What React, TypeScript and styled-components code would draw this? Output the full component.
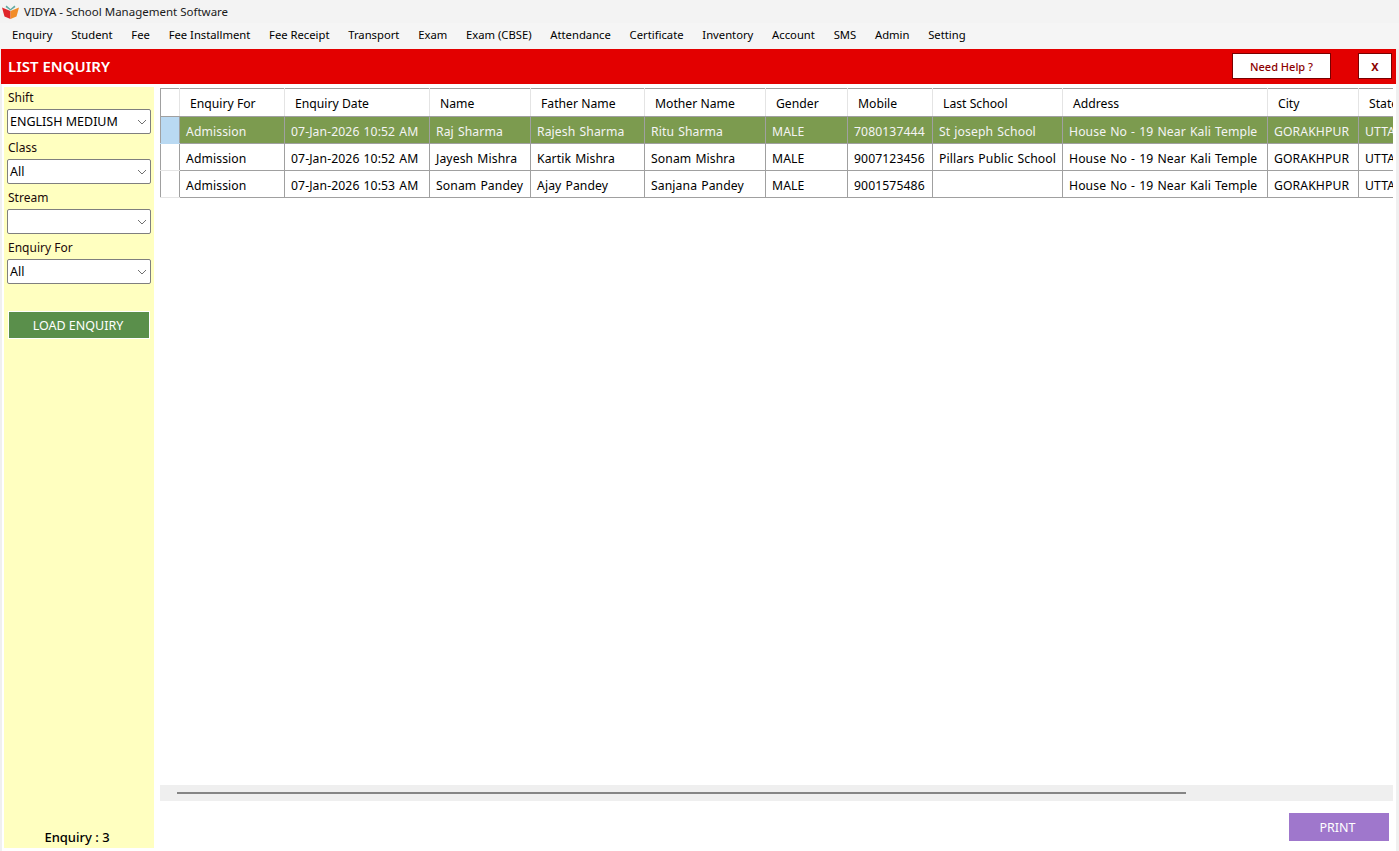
import styled, { createGlobalStyle } from "styled-components";

const GlobalStyle = createGlobalStyle`
  html, body {
    margin: 0;
    padding: 0;
    height: 100%;
    overflow: hidden;
    background: #f0f0f0;
    font-family: "Noto Sans", "Open Sans", sans-serif;
    font-size: 12px;
    color: #000000;
  }
`;

const Page = styled.div`
  width: 1399px;
  height: 851px;
  display: flex;
  flex-direction: column;
  background: #f0f0f0;
`;

const TitleBar = styled.div`
  height: 23px;
  display: flex;
  align-items: center;
  gap: 5px;
  padding-left: 2px;
  background: #f3f3f3;
  font-size: 11.5px;
  color: #1a1a1a;
`;

const MenuBar = styled.nav`
  height: 26px;
  padding: 0 0 3px 12px;
  box-sizing: border-box;
  display: flex;
  align-items: center;
  background: #f5f5f5;
`;

const MenuItem = styled.span`
  margin-right: 18.75px;
  font-size: 11.25px;
  white-space: nowrap;
`;

const Header = styled.header`
  height: 35px;
  margin: 0 3px 0 1px;
  padding: 0 4px 1px 7px;
  box-sizing: border-box;
  display: flex;
  align-items: center;
  background: #e30000;
`;

const Heading = styled.h1`
  flex: 1;
  margin: 0;
  font-size: 15px;
  font-weight: 600;
  color: #ffffff;
`;

const HeaderButton = styled.button<{ $wide?: boolean; $bold?: boolean }>`
  width: ${(p) => (p.$wide ? "99px" : "34px")};
  height: 26px;
  margin-left: ${(p) => (p.$wide ? "0" : "27px")};
  padding: 0;
  border: 1px solid #7a0000;
  background: #ffffff;
  color: #8c0000;
  font-family: inherit;
  font-size: 11px;
  font-weight: ${(p) => (p.$bold ? 700 : 500)};
`;

const Body = styled.div`
  flex: 1;
  min-height: 0;
  display: flex;
  margin: 0 3px 0 2px;
  background: #ffffff;
`;

const Sidebar = styled.aside`
  width: 150px;
  margin: 3px 0 3px 2px;
  padding: 4px 3px 2px 3px;
  box-sizing: border-box;
  display: flex;
  flex-direction: column;
  background: #ffffc0;
`;

const FieldLabel = styled.label`
  display: block;
  height: 18px;
  padding-left: 1px;
  line-height: 14px;
  font-size: 12px;
  color: #1a0a0a;
`;

const SelectBox = styled.div`
  height: 25px;
  margin-bottom: 7px;
  padding: 0 3px 0 2px;
  box-sizing: border-box;
  display: flex;
  align-items: center;
  justify-content: space-between;
  background: #ffffff;
  border: 1px solid #7f7f7f;
  border-radius: 2px;
  font-size: 12.5px;
`;

const LoadButton = styled.button`
  height: 26px;
  margin: 21px 2px 0 2px;
  padding: 0 2px 0 0;
  border: 0;
  outline: 1px solid #ffffff;
  background: #5a8f4b;
  color: #ffffff;
  font-family: inherit;
  font-size: 12.5px;
`;

const EnquiryCount = styled.div`
  margin-top: auto;
  padding-right: 4px;
  text-align: center;
  font-size: 13px;
  font-weight: 500;
`;

const Content = styled.main`
  flex: 1;
  min-width: 0;
  padding: 4px 3px 0 6px;
  display: flex;
  flex-direction: column;
`;

const GridWrap = styled.div`
  flex: 1;
  min-height: 0;
  overflow: hidden;
`;

const Grid = styled.table`
  width: 1298px;
  table-layout: fixed;
  border-collapse: collapse;
  border-top: 1px solid #a0a0a0;
  border-left: 1px solid #a0a0a0;
`;

const HeadCell = styled.th`
  height: 28px;
  padding: 1px 0 0 10px;
  box-sizing: border-box;
  text-align: left;
  font-size: 12.2px;
  font-weight: 400;
  white-space: nowrap;
  overflow: hidden;
  border-right: 1px solid #e4e4e4;
  border-bottom: 1px solid #a0a0a0;
`;

const Row = styled.tr<{ $selected?: boolean }>`
  background: ${(p) => (p.$selected ? "#7c9b4f" : "#ffffff")};
  color: ${(p) => (p.$selected ? "#f4f4f4" : "#000000")};
`;

const Cell = styled.td`
  height: 27px;
  padding: 3px 0 0 6px;
  box-sizing: border-box;
  font-size: 12.2px;
  letter-spacing: 0.1px;
  word-spacing: 0.8px;
  white-space: nowrap;
  overflow: hidden;
  border-right: 1px solid #a0a0a0;
  border-bottom: 1px solid #a0a0a0;
`;

const RowHead = styled.td<{ $selected?: boolean }>`
  padding: 0;
  background: ${(p) => (p.$selected ? "#b9d9f2" : "#ffffff")};
  border-right: 1px solid #a0a0a0;
  border-bottom: 1px solid ${(p) => (p.$selected ? "#b9d9f2" : "#e4e4e4")};
`;

const ScrollTrack = styled.div`
  height: 16px;
  display: flex;
  align-items: center;
  padding-left: 17px;
  background: #efefef;
`;

const ScrollThumb = styled.div`
  width: 1009px;
  height: 2px;
  background: #858585;
`;

const Footer = styled.div`
  height: 50px;
  display: flex;
  justify-content: flex-end;
  align-items: flex-start;
  padding: 12px 4px 0 0;
  box-sizing: border-box;
`;

const PrintButton = styled.button`
  width: 100px;
  height: 28px;
  padding: 0 3px 0 0;
  border: 0;
  background: #9f77cc;
  color: #ffffff;
  font-family: inherit;
  font-size: 12.5px;
`;

const MENU = [
  "Enquiry",
  "Student",
  "Fee",
  "Fee Installment",
  "Fee Receipt",
  "Transport",
  "Exam",
  "Exam (CBSE)",
  "Attendance",
  "Certificate",
  "Inventory",
  "Account",
  "SMS",
  "Admin",
  "Setting",
];

const COLUMNS = [
  { title: "Enquiry For", width: 105 },
  { title: "Enquiry Date", width: 145 },
  { title: "Name", width: 101 },
  { title: "Father Name", width: 114 },
  { title: "Mother Name", width: 121 },
  { title: "Gender", width: 82 },
  { title: "Mobile", width: 85 },
  { title: "Last School", width: 130 },
  { title: "Address", width: 205 },
  { title: "City", width: 91 },
  { title: "State", width: 100 },
];

const ADDRESS = "House No - 19 Near Kali Temple";

const ROWS = [
  ["Admission", "07-Jan-2026 10:52 AM", "Raj Sharma", "Rajesh Sharma", "Ritu Sharma", "MALE", "7080137444", "St joseph School", ADDRESS, "GORAKHPUR", "UTTAR PRADESH"],
  ["Admission", "07-Jan-2026 10:52 AM", "Jayesh Mishra", "Kartik Mishra", "Sonam Mishra", "MALE", "9007123456", "Pillars Public School", ADDRESS, "GORAKHPUR", "UTTAR PRADESH"],
  ["Admission", "07-Jan-2026 10:53 AM", "Sonam Pandey", "Ajay Pandey", "Sanjana Pandey", "MALE", "9001575486", "", ADDRESS, "GORAKHPUR", "UTTAR PRADESH"],
];

const FILTERS = [
  { label: "Shift", value: "ENGLISH MEDIUM" },
  { label: "Class", value: "All" },
  { label: "Stream", value: "" },
  { label: "Enquiry For", value: "All" },
];

function Chevron() {
  return (
    <svg width="10" height="6" viewBox="0 0 10 6" fill="none">
      <path d="M1 1l4 4 4-4" stroke="#707070" strokeWidth="1" />
    </svg>
  );
}

function Logo() {
  return (
    <svg width="17" height="15" viewBox="0 0 17 15">
      <path d="M0 3.5L8.5 7v8L2.5 12.5z" fill="#e0262a" />
      <path d="M17 3.5L8.5 7v8l6-2.5z" fill="#f28c28" />
      <path d="M4.5 1.5L8.5 5l4-3.5 1 1.5-5 3.5-5-3.5z" fill="#5fa8a0" />
    </svg>
  );
}

export default function App() {
  return (
    <Page>
      <GlobalStyle />
      <TitleBar>
        <Logo />
        VIDYA - School Management Software
      </TitleBar>
      <MenuBar>
        {MENU.map((item) => (
          <MenuItem key={item}>{item}</MenuItem>
        ))}
      </MenuBar>
      <Header>
        <Heading>LIST ENQUIRY</Heading>
        <HeaderButton $wide>Need Help ?</HeaderButton>
        <HeaderButton $bold>X</HeaderButton>
      </Header>
      <Body>
        <Sidebar>
          {FILTERS.map((f) => (
            <div key={f.label}>
              <FieldLabel>{f.label}</FieldLabel>
              <SelectBox>
                {f.value}
                <span />
                <Chevron />
              </SelectBox>
            </div>
          ))}
          <LoadButton>LOAD ENQUIRY</LoadButton>
          <EnquiryCount>Enquiry : 3</EnquiryCount>
        </Sidebar>
        <Content>
          <GridWrap>
            <Grid>
              <colgroup>
                <col width={19} />
                {COLUMNS.map((c) => (
                  <col key={c.title} width={c.width} />
                ))}
              </colgroup>
              <thead>
                <tr>
                  <HeadCell />
                  {COLUMNS.map((c) => (
                    <HeadCell key={c.title}>{c.title}</HeadCell>
                  ))}
                </tr>
              </thead>
              <tbody>
                {ROWS.map((row, i) => (
                  <Row key={row[6]} $selected={i === 0}>
                    <RowHead $selected={i === 0} />
                    {row.map((value, j) => (
                      <Cell key={j}>{value}</Cell>
                    ))}
                  </Row>
                ))}
              </tbody>
            </Grid>
          </GridWrap>
          <ScrollTrack>
            <ScrollThumb />
          </ScrollTrack>
          <Footer>
            <PrintButton>PRINT</PrintButton>
          </Footer>
        </Content>
      </Body>
    </Page>
  );
}
